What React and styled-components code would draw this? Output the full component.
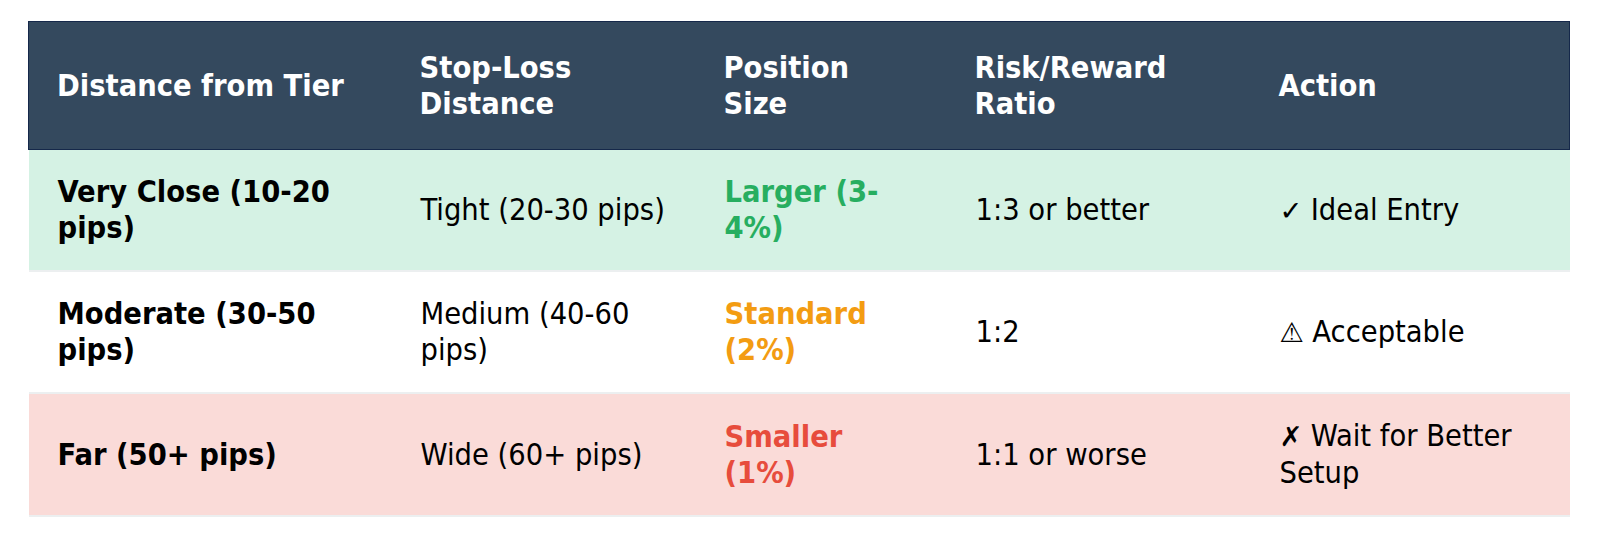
import React from "react";
import styled, { createGlobalStyle } from "styled-components";

const GlobalStyle = createGlobalStyle`
  html, body {
    margin: 0;
    padding: 0;
    background: #ffffff;
  }
  body {
    font-family: "DejaVu Sans Condensed", "DejaVu Sans", Tahoma, sans-serif;
    font-stretch: semi-condensed;
  }
`;

const Page = styled.div`
  padding: 21px 31px 40px 28px;
`;

const Table = styled.table`
  width: 1541px;
  border-collapse: collapse;
  table-layout: fixed;
  font-size: 30.5px;
  line-height: 36px;
`;

const HeadRow = styled.tr`
  background: #34495e;
  border: 1px solid #15284a;
`;

const HeadCell = styled.th`
  padding: 28px 10px 27px 28px;
  color: #ffffff;
  font-weight: 700;
  text-align: left;
  vertical-align: middle;
  white-space: nowrap;
`;

const tints = {
  good: "#d5f2e4",
  neutral: "#ffffff",
  bad: "#fadbd8",
};

const BodyRow = styled.tr`
  background: ${(p) => tints[p.$tone]};
  border-bottom: 2px solid #eceff0;
`;

const Cell = styled.td`
  padding: 24px 10px 24px 29px;
  color: #000000;
  font-weight: ${(p) => (p.$strong ? 700 : 400)};
  vertical-align: middle;
  white-space: nowrap;
`;

const sizeColors = {
  good: "#27ae60",
  neutral: "#f39c12",
  bad: "#e74c3c",
};

const SizeText = styled.span`
  color: ${(p) => sizeColors[p.$tone]};
  font-weight: 700;
`;

const Mark = styled.span`
  font-family: "DejaVu Sans", sans-serif;
  font-stretch: normal;
  font-weight: 700;
  font-size: 0.9em;
  margin-right: 0.3em;
`;

const columns = [
  { title: ["Distance from Tier"], width: 363 },
  { title: ["Stop-Loss", "Distance"], width: 304 },
  { title: ["Position", "Size"], width: 251 },
  { title: ["Risk/Reward", "Ratio"], width: 304 },
  { title: ["Action"], width: 319 },
];

const rows = [
  {
    tone: "good",
    distance: ["Very Close (10-20", "pips)"],
    stop: ["Tight (20-30 pips)"],
    size: ["Larger (3-", "4%)"],
    ratio: ["1:3 or better"],
    mark: "\u2713",
    action: ["Ideal Entry"],
  },
  {
    tone: "neutral",
    distance: ["Moderate (30-50", "pips)"],
    stop: ["Medium (40-60", "pips)"],
    size: ["Standard", "(2%)"],
    ratio: ["1:2"],
    mark: "\u26A0\uFE0E",
    action: ["Acceptable"],
  },
  {
    tone: "bad",
    distance: ["Far (50+ pips)"],
    stop: ["Wide (60+ pips)"],
    size: ["Smaller", "(1%)"],
    ratio: ["1:1 or worse"],
    mark: "\u2717",
    action: ["Wait for Better", "Setup"],
  },
];

const Lines = ({ lines }) =>
  lines.map((line, i) => (
    <React.Fragment key={i}>
      {i > 0 && <br />}
      {line}
    </React.Fragment>
  ));

export default function App() {
  return (
    <>
      <GlobalStyle />
      <Page>
        <Table>
          <colgroup>
            {columns.map((c, i) => (
              <col key={i} style={{ width: c.width }} />
            ))}
          </colgroup>
          <thead>
            <HeadRow>
              {columns.map((c, i) => (
                <HeadCell key={i}>
                  <Lines lines={c.title} />
                </HeadCell>
              ))}
            </HeadRow>
          </thead>
          <tbody>
            {rows.map((r, i) => (
              <BodyRow key={i} $tone={r.tone}>
                <Cell $strong>
                  <Lines lines={r.distance} />
                </Cell>
                <Cell>
                  <Lines lines={r.stop} />
                </Cell>
                <Cell>
                  <SizeText $tone={r.tone}>
                    <Lines lines={r.size} />
                  </SizeText>
                </Cell>
                <Cell>
                  <Lines lines={r.ratio} />
                </Cell>
                <Cell>
                  <Mark>{r.mark}</Mark>
                  <Lines lines={r.action} />
                </Cell>
              </BodyRow>
            ))}
          </tbody>
        </Table>
      </Page>
    </>
  );
}
